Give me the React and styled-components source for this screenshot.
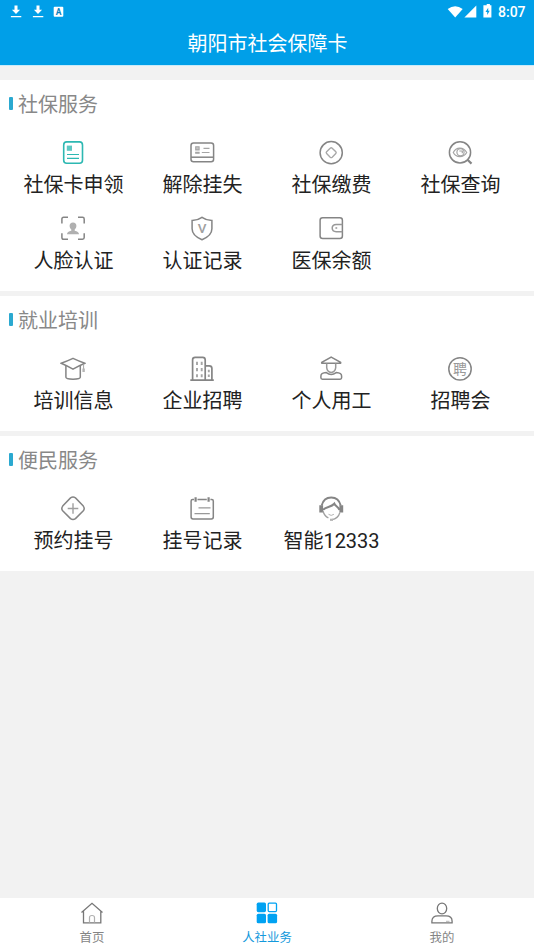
import React, { useState } from "react";
import styled, { createGlobalStyle } from "styled-components";

const IconText = styled.text`
  fill: ${({ $color }) => $color || "#999"};
  stroke: none;
  font-size: ${({ $size }) => $size}px;
  font-weight: ${({ $weight }) => $weight || 400};
  text-anchor: middle;
`;

const icons = {
  card: (
    <g stroke="#2db8b2">
      <rect x="3.7" y="1.9" width="18.8" height="21.3" rx="3" strokeWidth="1.6" />
      <rect x="6.8" y="5.6" width="5.2" height="5.2" fill="#5cc8c3" stroke="none" />
      <path d="M7 14.5h12M7 18.4h12" strokeWidth="1.2" />
    </g>
  ),
  unlock: (
    <>
      <rect x="2" y="3" width="22.6" height="18.8" rx="2.5" />
      <path d="M2 17.2h22.6" />
      <g stroke="#a5a5a5" strokeWidth="1.1">
        <path d="M14.5 8.4h6M12.8 12.5h7.7" />
        <path d="M6.7 6.7h3.4v3.2H6.7zM6.7 12.300h3.400v1H6.700z" fill="#c4c4c4" />
      </g>
    </>
  ),
  pay: (
    <>
      <circle cx="13.2" cy="12.7" r="11.1" />
      <path
        d="M12.2 8.2q1-.9 2 0l3.6 3.6q.8.9 0 1.8l-3.6 3.6q-1 .8-2 0l-3.6-3.6q-.8-.9 0-1.8z"
        stroke="#a8a8a8"
        strokeWidth="1.4"
      />
    </>
  ),
  search: (
    <>
      <circle cx="13" cy="12.4" r="10.6" />
      <path d="M20.5 19.8l4 3.8" strokeWidth="2.2" />
      <g stroke="#a5a5a5" strokeWidth="1.2">
        <path d="M6.3 12.500c2.800-5.900 10.200-5.900 13.400 0-3.200 5.500-10.600 5.500-13.400 0z" />
        <circle cx="13.5" cy="12.2" r="3.6" />
        <path d="M12.300 11h3v2.300" />
      </g>
    </>
  ),
  face: (
    <>
      <path d="M1.9 7.500V3q0-1.700 1.700-1.700H8M18 1.300h4.500q1.700 0 1.700 1.700v4.500M24.200 17.300v4.300q0 1.700-1.700 1.700H18M8 23.300H3.600q-1.700 0-1.700-1.700v-4.300" />
      <path
        d="M13 6.400c2.200 0 3.400 1.400 3.400 3.400 0 1.700-.8 3-1.700 3.600v1.300c2.600.5 4.300 1.500 4.300 3.600H7c0-2.100 1.700-3.100 4.300-3.600v-1.300c-.9-.6-1.700-1.900-1.700-3.600 0-2 1.200-3.400 3.400-3.400z"
        fill="#b0b0b0"
        stroke="none"
      />
    </>
  ),
  shield: (
    <>
      <path d="M13 1.300c3 2.200 6.300 3 9.900 3.200v8.300c0 5.200-4.400 8.700-9.900 10.900-5.500-2.200-9.900-5.700-9.900-10.900V4.500C6.700 4.300 10 3.500 13 1.300z" />
      <IconText x="13" y="17.200" $size={13.5} $color="#a0a0a0" $weight={500}>V</IconText>
    </>
  ),
  wallet: (
    <>
      <rect x="2.1" y="1.7" width="22.3" height="20.7" rx="2.5" />
      <path d="M24.400 8.400h-6.200q-4 .2-4 3.700t4 3.700h6.200" stroke="#999" />
      <circle cx="18.3" cy="12" r="1.1" fill="#aaa" stroke="none" />
    </>
  ),
  cap: (
    <>
      <path d="M1.200 7.300Q7 5.200 13 2.400q6 2.800 11.800 4.900Q19 9.800 13 13.200 7 9.800 1.200 7.300z" />
      <path d="M5.900 10v11.300q0 1.800 7.100 1.900 7.300-.1 7.300-1.900V10" />
      <path d="M23.600 8v7" stroke="#a5a5a5" strokeWidth="1" />
      <path d="M23.600 12.500v3.500" stroke="#b5b5b5" strokeWidth="2.4" />
    </>
  ),
  building: (
    <>
      <path d="M3.600 23.500V3.800q0-2.500 2.500-2.500h7.600q2.500 0 2.500 2.500v19.700M16.200 9.900h4q2.700 0 2.700 2.600v11M1.300 24.200h23.500" strokeWidth="1.7" />
      <path
        d="M8 5.700v3.200M12.700 5.700v3.200M8 12v3.200M12.700 12v3.200M8 18.300v2.900M12.700 18.300v2.900M19.800 13.800v2.400M19.800 18.600v2.400"
        stroke="#a5a5a5"
        strokeWidth="1.9"
      />
    </>
  ),
  worker: (
    <>
      <path d="M13.200 1.100l9.400 5.300q.5.900-.6.900H4.400q-1.100 0-.6-.9z" />
      <path d="M8.700 7.600v4.100q.5 4.400 4.500 4.700 4-.3 4.500-4.700V7.600" stroke="#999" />
      <path d="M8.300 16.600Q2.900 17 2.900 20v1.800q0 1.400 1.500 1.400h17.700q1.500 0 1.500-1.400V20q0-3-5.400-3.400-5 3.600-9.900 0z" />
    </>
  ),
  fair: (
    <>
      <circle cx="13" cy="12.9" r="11.2" />
      <IconText x="13" y="17.9" $size={14}>聘</IconText>
    </>
  ),
  booking: (
    <>
      <path d="M10.500 1.900q2.500-1.600 5 0l7.800 8.200q1.800 2.300 0 4.600l-7.800 7.900q-2.500 1.900-5 0l-7.800-7.900q-1.800-2.300 0-4.600z" />
      <path d="M13 7.200v10.600M7.700 12.500h10.600" stroke="#a0a0a0" strokeWidth="1.4" />
    </>
  ),
  calendar: (
    <>
      <path d="M5 3.500H3.600Q2.100 3.500 2.100 5v16q0 1.900 1.900 1.900h18.400q1.900 0 1.900-1.900V5q0-1.500-1.500-1.500h-1.400M8.500 3.500h9.300" />
      <path d="M6.600 1.200v4.500M19.600 1.200v4.500" strokeWidth="2.2" />
      <path d="M9.500 11.800h12M5.500 17.600h15.300" stroke="#999" strokeWidth="1.2" />
    </>
  ),
  service: (
    <>
      <path d="M3.700 9.600C5 4 8.500 1.500 13.200 1.500s8.200 2.500 9.500 8.100" strokeWidth="2" />
      <path d="M3.200 9.200v7.200M23.300 9.200v7.200" strokeWidth="3.8" />
      <path d="M5 13.800c3-3.600 8-2.200 11.300-6.100 1 2.600 4 2.700 5.200 6.300" strokeWidth="2.1" />
      <path d="M5 15q1.400 5.200 5.400 6.900M21.900 16.500q-1.800 6.200-8 7.200" stroke="#a0a0a0" strokeWidth="1.3" />
      <path d="M10.500 18.300q2.700 2.200 5.400 0" stroke="#b5b5b5" strokeWidth="1" />
      <path d="M12 23.800h3" stroke="#b5b5b5" strokeWidth="2.2" />
    </>
  ),
};

const sections = [
  {
    title: "社保服务",
    items: [
      { icon: "card", label: "社保卡申领" },
      { icon: "unlock", label: "解除挂失" },
      { icon: "pay", label: "社保缴费" },
      { icon: "search", label: "社保查询" },
      { icon: "face", label: "人脸认证" },
      { icon: "shield", label: "认证记录" },
      { icon: "wallet", label: "医保余额" },
    ],
  },
  {
    title: "就业培训",
    items: [
      { icon: "cap", label: "培训信息" },
      { icon: "building", label: "企业招聘" },
      { icon: "worker", label: "个人用工" },
      { icon: "fair", label: "招聘会" },
    ],
  },
  {
    title: "便民服务",
    items: [
      { icon: "booking", label: "预约挂号" },
      { icon: "calendar", label: "挂号记录" },
      { icon: "service", label: "智能12333" },
    ],
  },
];

const tabs = [
  {
    key: "home",
    label: "首页",
    icon: (
      <>
        <path d="M1.500 11.500L12 2.300l10.500 9.200M3.500 10v11.900h17.300V10" />
        <path d="M9.500 21.500v-5q0-2 2.500-2t2.500 2v5" stroke="#b0b0b0" strokeWidth="1.2" />
      </>
    ),
  },
  {
    key: "business",
    label: "人社业务",
    icon: (
      <>
        <g fill="#00a2f2" stroke="none">
          <rect x="1.7" y="1.6" width="9.3" height="9.6" rx="1.6" />
          <rect x="1.7" y="12.7" width="9.3" height="9.6" rx="1.6" />
          <rect x="12.6" y="12.7" width="9.5" height="9.6" rx="1.6" />
        </g>
        <rect x="13.2" y="2.2" width="8.3" height="8.4" rx="1" stroke="#00a2f2" />
      </>
    ),
  },
  {
    key: "mine",
    label: "我的",
    icon: (
      <>
        <ellipse cx="12" cy="7.500" rx="4.700" ry="5.400" />
        <path d="M1.900 21.900v-1.700q0-5.300 6.100-5.300h8q6.100 0 6.100 5.300v1.700z" />
        <path d="M16 20.300h3.500" stroke="#b5b5b5" strokeWidth="1" />
      </>
    ),
  },
];

const Download = () => (
  <svg width="12" height="14" viewBox="0 0 12 14">
    <path d="M4.500.5h3v4.200h2.600L6 9 1.900 4.700h2.600zM.9 11h10.400v1.300H.9z" fill="#fff" />
  </svg>
);

const StatusBar = () => (
  <Status>
    <StatusGroup $gap="9.5px">
      <Download />
      <Download />
      <svg width="11" height="14" viewBox="0 0 11 14">
        <rect x=".7" y="1.7" width="9.6" height="10" rx="1" fill="#fff" />
        <IconText x="5.5" y="9.7" $size={8.5} $color="#0b7fbd" $weight={700}>A</IconText>
      </svg>
    </StatusGroup>
    <StatusGroup $gap="0">
      <svg width="47" height="16" viewBox="0 0 47 16" fill="#fff">
        <path d="M.7 5q7.500-5.300 15 0L8.200 13.600z" />
        <path d="M29.300 1.400v12.200H17.400z" />
        <path d="M38.200 1.200h1.500V.1h3.200v1.100h1.500v12.300h-8V1.200z" />
        <path d="M41.200 3.700l-2.700 4.300h1.700v3l2.500-4.300h-1.500z" fill="#009fe8" />
      </svg>
      <Clock>8:07</Clock>
    </StatusGroup>
  </Status>
);

export const App = () => {
  const [activeTab, setActiveTab] = useState("business");

  return (
    <Page>
      <GlobalStyle />
      <Header>
        <StatusBar />
        <Title>朝阳市社会保障卡</Title>
      </Header>

      <Content>
        {sections.map((section) => (
          <Section key={section.title}>
            <SectionTitle>{section.title}</SectionTitle>
            <Grid>
              {section.items.map((item) => (
                <Item key={item.label}>
                  <ItemIcon viewBox="0 0 26 26">{icons[item.icon]}</ItemIcon>
                  <ItemLabel>{item.label}</ItemLabel>
                </Item>
              ))}
            </Grid>
          </Section>
        ))}
      </Content>

      <TabBar>
        {tabs.map((tab) => (
          <Tab
            key={tab.key}
            $active={tab.key === activeTab}
            onClick={() => setActiveTab(tab.key)}
          >
            <TabIcon viewBox="0 0 24 24">{tab.icon}</TabIcon>
            <span>{tab.label}</span>
          </Tab>
        ))}
      </TabBar>
    </Page>
  );
};

const GlobalStyle = createGlobalStyle`
  * {
    box-sizing: border-box;
  }

  body {
    margin: 0;
    font-family: Roboto, "Noto Sans CJK SC", sans-serif;
  }
`;

const Page = styled.div`
  display: flex;
  flex-direction: column;
  height: 100vh;
  background-color: #f2f2f2;
`;

const Header = styled.header`
  flex: none;
  height: 66px;
  background-color: #009fe8;
  border-bottom: 1px solid #c9ebfa;
  color: #fff;
`;

const Status = styled.div`
  display: flex;
  justify-content: space-between;
  align-items: center;
  height: 23px;
  padding: 0 7px 0 10px;
`;

const StatusGroup = styled.div`
  display: flex;
  align-items: center;
  gap: ${({ $gap }) => $gap};
`;

const Clock = styled.span`
  width: 29px;
  margin-left: 4px;
  font-size: 14px;
  font-weight: 500;
  line-height: 16px;
`;

const Title = styled.h1`
  margin: 0;
  padding-left: 1px;
  font-size: 20px;
  font-weight: 400;
  line-height: 43px;
  text-align: center;
`;

const Content = styled.main`
  flex: 1;
  display: flex;
  flex-direction: column;
  gap: 5px;
  padding-top: 14px;
`;

const Section = styled.section`
  padding-bottom: 11px;
  background-color: #fff;
`;

const SectionTitle = styled.h2`
  display: flex;
  align-items: center;
  gap: 5px;
  height: 48px;
  margin: 0;
  padding: 0 0 1px 9px;
  color: #888;
  font-size: 20px;
  font-weight: 400;

  &::before {
    content: "";
    width: 4px;
    height: 13px;
    border-radius: 1px;
    background-color: #2ba9d0;
  }
`;

const Grid = styled.div`
  display: grid;
  grid-template-columns: repeat(4, 129px);
  padding-left: 8.5px;
`;

const Item = styled.div`
  display: flex;
  flex-direction: column;
  align-items: center;
  gap: 4px;
  height: 76px;
  padding-top: 12px;
`;

const ItemIcon = styled.svg`
  flex: none;
  width: 26px;
  height: 26px;
  fill: none;
  stroke: #858585;
  stroke-width: 1.5;
`;

const ItemLabel = styled.span`
  padding-left: 1px;
  color: #222;
  font-size: 20px;
  line-height: 30px;
  white-space: nowrap;
`;

const TabBar = styled.nav`
  flex: none;
  display: flex;
  height: 52px;
  padding: 0 4.5px;
  background-color: #fff;
`;

const Tab = styled.div`
  flex: 1;
  display: flex;
  flex-direction: column;
  align-items: center;
  gap: 4px;
  padding-top: 3px;
  color: ${({ $active }) => ($active ? "#1499dc" : "#858585")};
  font-size: 12.4px;
  line-height: 18px;
  cursor: pointer;
`;

const TabIcon = styled.svg`
  flex: none;
  width: 24px;
  height: 24px;
  fill: none;
  stroke: #777;
  stroke-width: 1.3;
`;

export default App;
